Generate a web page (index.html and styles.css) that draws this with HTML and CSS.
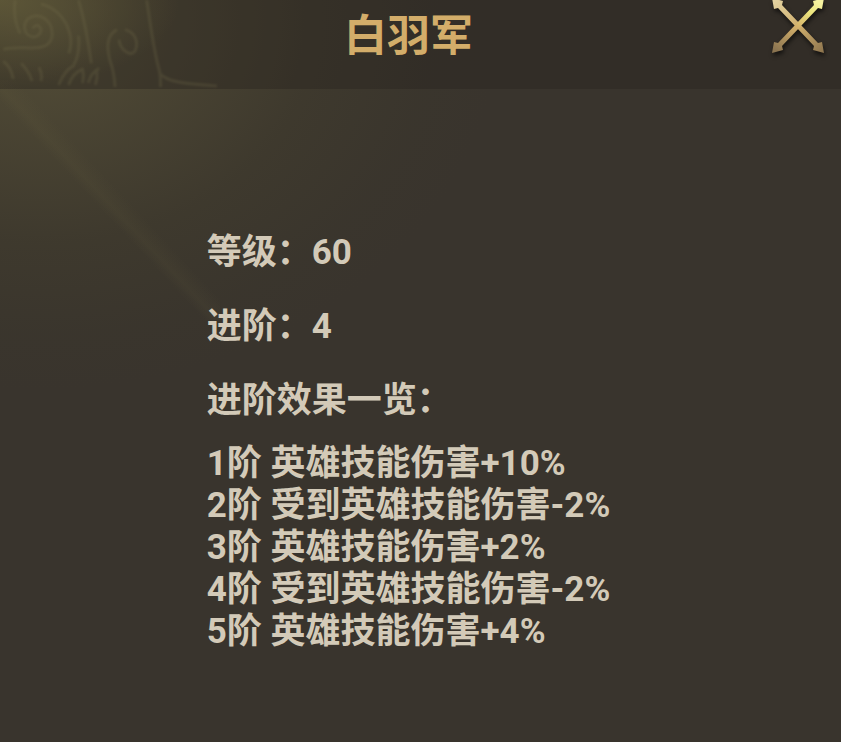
FILE: index.html
```html
<!DOCTYPE html>
<html lang="zh-CN">
<head>
    <meta charset="UTF-8">
    <meta name="viewport" content="width=device-width, initial-scale=1.0">
    <title>白羽军</title>
    <link rel="stylesheet" href="styles.css">
</head>
<body>
    <div class="panel">
        <header class="panel-header">
            <!-- 左上角暗纹 -->
            <svg class="pattern" viewBox="0 0 240 90" aria-hidden="true">
                <path d="M14 0C12 14 14 24 19 34M2 50C18 44 46 56 51 38C54 20 36 10 26 20C18 30 30 44 39 34C43 27 34 22 32 29"/>
                <path d="M40 4C58 8 68 24 70 38Q71 48 68 54M78 0C84 20 88 42 91 64M78 36Q80 54 73 66"/>
                <path d="M117 30C105 36 107 50 110 62Q114 72 115 88M119 40C120 50 130 58 135 52C140 42 134 32 125 30"/>
                <path d="M147 0C151 26 154 52 160 72Q161 78 161 88M160 74C168 83 182 84 218 87"/>
                <path d="M2 62Q10 68 12 80M20 64Q28 72 31 82M38 68Q42 76 40 82M58 86Q64 70 74 66M68 86Q72 74 82 70Q84 76 82 84M88 84Q90 74 99 69M96 70Q98 78 95 86"/>
            </svg>
            <h1 class="title">白羽军</h1>
            <button class="close" type="button" aria-label="关闭">
                <svg class="close-icon" viewBox="0 0 56 58" aria-hidden="true">
                    <defs>
                        <linearGradient id="gold" gradientUnits="userSpaceOnUse" x1="12" y1="54" x2="44" y2="0">
                            <stop offset="0" stop-color="#8b7450"/>
                            <stop offset="0.5" stop-color="#d5b16b"/>
                            <stop offset="0.8" stop-color="#ece57d"/>
                            <stop offset="1" stop-color="#f6f2a0"/>
                        </linearGradient>
                        <linearGradient id="bronze" gradientUnits="userSpaceOnUse" x1="4" y1="0" x2="52" y2="54">
                            <stop offset="0" stop-color="#e3d3a2"/>
                            <stop offset="0.5" stop-color="#cfae6c"/>
                            <stop offset="1" stop-color="#8d744e"/>
                        </linearGradient>
                    </defs>
                    <path fill="url(#bronze)" d="M2 -2L13 1L12 5L48 43L52 42L54 53L43 50L44 46L8 8L4 9Z"/>
                    <path fill="url(#gold)" d="M54 -2L52 9L48 8L12 46L13 50L2 53L4 42L8 43L44 5L43 1Z"/>
                </svg>
            </button>
        </header>

        <main class="content">
            <div class="info">
                <p>等级：60</p>
                <p>进阶：4</p>
                <h2>进阶效果一览：</h2>
                <ul class="effects">
                    <li>1阶 英雄技能伤害+10%</li>
                    <li>2阶 受到英雄技能伤害-2%</li>
                    <li>3阶 英雄技能伤害+2%</li>
                    <li>4阶 受到英雄技能伤害-2%</li>
                    <li>5阶 英雄技能伤害+4%</li>
                </ul>
            </div>
        </main>
    </div>
</body>
</html>
```
FILE: styles.css
```css
* {
    box-sizing: border-box;
    margin: 0;
    padding: 0;
}
body {
    background: #39342d;
    color: #d3cab8;
    font-family: Roboto, "Noto Sans CJK SC", sans-serif;
}
.panel {
    min-height: 100vh;
    background:
        linear-gradient(47deg, transparent 46%, rgba(112, 104, 66, 0.1) 49%, transparent 54%) 0 80px / 220px 240px no-repeat,
        radial-gradient(ellipse 460px 370px at 40px 20px, rgba(94, 88, 60, 0.75), rgba(84, 78, 54, 0.6) 30%, rgba(70, 65, 46, 0.4) 60%, rgba(62, 58, 44, 0.2) 85%, transparent);
}
.panel-header {
    position: relative;
    display: grid;
    grid-template-columns: 1fr auto 1fr;
    height: 89px;
    padding-right: 24px;
    background:
        radial-gradient(ellipse 180px 90px at 0 0, rgba(120, 112, 66, 0.5), transparent),
        rgba(40, 36, 31, 0.4);
}
.pattern {
    position: absolute;
    top: 0;
    left: 0;
    width: 240px;
    height: 89px;
    fill: none;
    stroke: #77704d;
    stroke-width: 3;
    opacity: 0.25;
    filter: blur(1px);
}
.title {
    grid-column: 2;
    padding-top: 11px;
    color: #d3ad6a;
    font-size: 43px;
    line-height: 50px;
}
.close {
    justify-self: end;
    align-self: start;
    margin-right: -9px;
    border: none;
    background: none;
    cursor: pointer;
}
.close-icon {
    display: block;
    width: 56px;
    height: 58px;
    filter: drop-shadow(1px 3px 2px rgba(0, 0, 0, 0.6));
}
.content {
    display: flex;
    justify-content: center;
    padding: 143px 24px 88px 0;
}
.info {
    font-size: 35px;
    font-weight: bold;
    line-height: 42px;
}
.info p {
    margin-bottom: 32px;
}
.info h2 {
    margin-bottom: 21px;
    font-size: 35px;
}
.effects {
    list-style: none;
}
```
